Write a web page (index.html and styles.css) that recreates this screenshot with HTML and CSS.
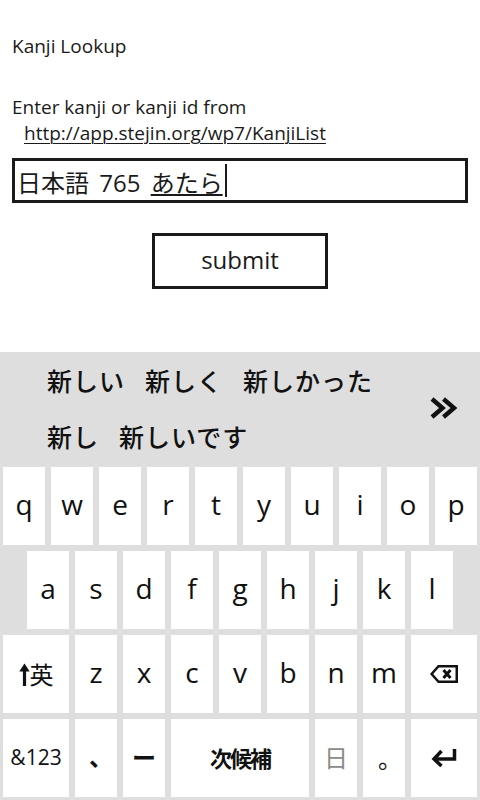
FILE: index.html
```html
<!DOCTYPE html>
<html lang="ja">
<head>
<meta charset="utf-8">
<title>Kanji Lookup</title>
<link rel="stylesheet" href="styles.css">
</head>
<body>
<div class="screen">
  <div class="page">
    <div class="title">Kanji Lookup</div>
    <div class="intro">Enter kanji or kanji id from</div>
    <div class="link">http://app.stejin.org/wp7/KanjiList</div>
    <div class="textbox"><span class="typed">日本語 765 <span class="compose">あたら</span></span><span class="caret"></span></div>
    <div class="submit-row"><div class="submit">submit</div></div>
  </div>
  <div class="keyboard">
    <div class="candidates">
      <div class="cand-list">
        <div class="cand-row"><span class="cand">新しい</span><span class="cand">新しく</span><span class="cand">新しかった</span></div>
        <div class="cand-row"><span class="cand">新し</span><span class="cand">新しいです</span></div>
      </div>
      <div class="more">
        <svg width="28" height="22" viewBox="0 0 28 22"><path d="M2 2 L12.5 11 L2 20 M13.5 2 L24 11 L13.5 20" fill="none" stroke="#111" stroke-width="4.4" stroke-linejoin="miter"/></svg>
      </div>
    </div>
    <div class="keys">
      <div class="row">
        <div class="key">q</div><div class="key">w</div><div class="key">e</div><div class="key">r</div><div class="key">t</div><div class="key">y</div><div class="key">u</div><div class="key">i</div><div class="key">o</div><div class="key">p</div>
      </div>
      <div class="row row-indent">
        <div class="key">a</div><div class="key">s</div><div class="key">d</div><div class="key">f</div><div class="key">g</div><div class="key">h</div><div class="key">j</div><div class="key">k</div><div class="key">l</div>
      </div>
      <div class="row">
        <div class="key wide shift"><svg width="11" height="23" viewBox="0 0 11 23"><path d="M5.5 5 V23" stroke="#111" stroke-width="3.2"/><path d="M0.3 8.5 L5.5 0.5 L10.7 8.5 Z" fill="#111"/></svg><span class="cjk">英</span></div>
        <div class="key">z</div><div class="key">x</div><div class="key">c</div><div class="key">v</div><div class="key">b</div><div class="key">n</div><div class="key">m</div>
        <div class="key wide"><svg width="28" height="18" viewBox="0 0 28 18"><path d="M8.5 1.25 H26.75 V16.75 H8.5 L1.6 9 Z" fill="none" stroke="#111" stroke-width="2.5"/><path d="M13.5 5 L20.5 13 M20.5 5 L13.5 13" stroke="#111" stroke-width="3"/></svg></div>
      </div>
      <div class="row">
        <div class="key wide small">&amp;123</div>
        <div class="key cjk punct comma">、</div>
        <div class="key cjk punct dash">ー</div>
        <div class="key space cjk">次候補</div>
        <div class="key cjk hi">日</div>
        <div class="key cjk punct period">。</div>
        <div class="key wide"><svg width="26" height="18" viewBox="0 0 26 18"><path d="M4 10 H23.5 V0" fill="none" stroke="#111" stroke-width="3.5"/><path d="M10.5 2 L3 10 L10.5 17" fill="none" stroke="#111" stroke-width="3.5"/></svg></div>
      </div>
    </div>
  </div>
</div>
</body>
</html>
```
FILE: styles.css
```css
html, body {
  margin: 0;
  padding: 0;
  background: #ffffff;
}
body {
  font-family: "Open Sans", "Noto Sans CJK JP", sans-serif;
  color: #1a1a1a;
}
.screen {
  width: 480px;
  height: 800px;
  overflow: hidden;
  display: flex;
  flex-direction: column;
}
.page {
  height: 352px;
  box-sizing: border-box;
  padding: 38px 12px 0 12px;
  font-size: 19px;
  line-height: 17px;
}
.title {
  height: 17px;
}
.intro {
  margin-top: 44px;
}
.link {
  margin-top: 9px;
  padding-left: 12px;
  text-decoration: underline;
  text-decoration-thickness: 1px;
  text-underline-offset: 3px;
}
.textbox {
  margin-top: 16px;
  height: 45px;
  box-sizing: border-box;
  border: 3px solid #1a1a1a;
  display: flex;
  align-items: center;
  padding-left: 2px;
  font-family: "Open Sans", "Noto Sans CJK JP", sans-serif;
  font-size: 24px;
  line-height: 1;
}
.typed {
  white-space: pre;
  word-spacing: 4px;
  padding-top: 3px;
}
.compose {
  font-family: "Noto Sans CJK JP", sans-serif;
  text-decoration: underline;
  text-decoration-thickness: 2px;
  text-underline-offset: 2px;
}
.caret {
  width: 2px;
  height: 33px;
  background: #1a1a1a;
  margin-left: 2px;
}
.submit-row {
  margin-top: 30px;
  display: flex;
  justify-content: center;
}
.submit {
  width: 176px;
  height: 56px;
  box-sizing: border-box;
  border: 3px solid #1a1a1a;
  display: flex;
  align-items: center;
  justify-content: center;
  font-size: 24px;
  line-height: 1;
  padding-bottom: 2px;
}
.keyboard {
  flex: 1;
  background: #dedede;
  display: flex;
  flex-direction: column;
}
.candidates {
  height: 112px;
  display: flex;
  align-items: center;
}
.cand-list {
  flex: 1;
  padding-left: 47px;
  align-self: flex-start;
}
.cand-row {
  height: 56px;
  display: flex;
  align-items: center;
  gap: 20px;
  font-family: "Noto Sans CJK JP", sans-serif;
  font-size: 25px;
  letter-spacing: 1px;
  font-weight: 500;
  color: #111;
  line-height: 1;
}
.more {
  width: 28px;
  height: 22px;
  margin-right: 22px;
  display: flex;
}
.keys {
  padding: 3px;
  display: flex;
  flex-direction: column;
  gap: 6px;
}
.row {
  display: flex;
  gap: 6px;
  height: 78px;
}
.row-indent {
  padding-left: 24px;
}
.key {
  width: 42px;
  height: 78px;
  background: #ffffff;
  display: flex;
  align-items: center;
  justify-content: center;
  font-size: 28px;
  color: #111;
  line-height: 1;
  box-sizing: border-box;
  padding-bottom: 4px;
}
.key svg {
  display: block;
}
.wide {
  width: 66px;
  padding-bottom: 0;
}
.space {
  width: 138px;
}
.cjk {
  font-family: "Noto Sans CJK JP", sans-serif;
}
.shift .cjk {
  font-size: 24px;
  margin-left: 0;
}
.small {
  font-size: 21px;
  padding-bottom: 2px;
}
.space.cjk {
  font-size: 22px;
  font-weight: 700;
  letter-spacing: -2px;
  padding-bottom: 2px;
}
.hi {
  font-size: 24px;
  color: #8a8a8a;
  padding-bottom: 2px;
}
.punct {
  font-size: 24px;
  font-weight: 700;
}
.comma {
  padding-left: 10px;
}
.period {
  padding-left: 12px;
  padding-bottom: 0;
  font-weight: 400;
}
.dash {
  padding-bottom: 2px;
}
```
